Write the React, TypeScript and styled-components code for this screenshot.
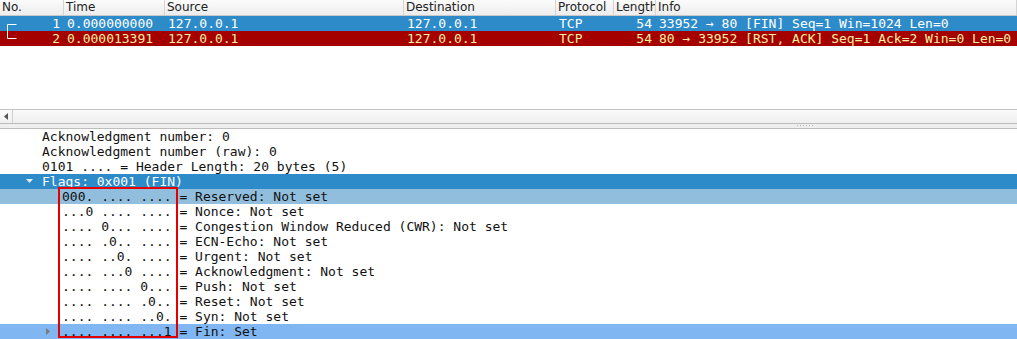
import React from "react";
import styled, { createGlobalStyle, css } from "styled-components";

const GlobalStyle = createGlobalStyle`
  html, body { margin: 0; padding: 0; background: #fff; }
  body { width: 1017px; height: 339px; overflow: hidden; }
`;

const MONO = `"DejaVu Sans Mono", "Liberation Mono", monospace`;
const SANS = `"DejaVu Sans", "Liberation Sans", sans-serif`;

const COLS = "64px 101px 239px 152px 58px 42px 1fr";

const Window = styled.div`
  width: 1017px;
  height: 339px;
  display: flex;
  flex-direction: column;
  overflow: hidden;
`;

const PacketList = styled.div`
  height: 109px;
  background: #fff;
  display: flex;
  flex-direction: column;
`;

const Header = styled.div`
  display: grid;
  grid-template-columns: ${COLS};
  height: 16px;
  background: linear-gradient(#fbfbfb, #ededed);
  border-bottom: 1px solid #c8c8c8;
  box-sizing: border-box;
`;

const HeadCell = styled.div`
  font-family: ${SANS};
  font-size: 12px;
  line-height: 15px;
  color: #222;
  padding-left: 2px;
  border-right: 1px solid #d4d4d4;
  white-space: nowrap;
  overflow: hidden;
`;

const PacketRow = styled.div<{ $bg: string; $fg: string }>`
  display: grid;
  grid-template-columns: ${COLS};
  height: 15px;
  background: ${(p) => p.$bg};
  color: ${(p) => p.$fg};
  font-family: ${MONO};
  font-size: 13px;
  line-height: 15px;
`;

const Cell = styled.div<{ $right?: boolean }>`
  position: relative;
  white-space: nowrap;
  overflow: hidden;
  padding: 0 4px 0 3px;
  ${(p) =>
    p.$right &&
    css`
      text-align: right;
    `}
`;

const Bracket = styled.svg`
  position: absolute;
  left: 6px;
  top: 0;
`;

const HScroll = styled.div`
  height: 15px;
  box-sizing: border-box;
  border-top: 1px solid #c2c2c2;
  border-bottom: 1px solid #bdbdbd;
  background: linear-gradient(#fafafa, #efefef);
  display: flex;
`;

const ScrollBtn = styled.div`
  width: 12px;
  border-right: 1px solid #cfcfcf;
  display: flex;
  align-items: center;
  justify-content: center;
`;

const Splitter = styled.div`
  height: 5px;
  box-sizing: border-box;
  background: #efefef;
  border-bottom: 1px solid #bdbdbd;
  display: flex;
  justify-content: center;
  padding-left: 594px;
  padding-top: 1px;
`;

const Dots = styled.div`
  width: 18px;
  height: 1px;
  background: repeating-linear-gradient(90deg, #b8b8b8 0 1px, transparent 1px 3px);
`;

const Details = styled.div`
  position: relative;
  flex: 1;
  background: #fff;
`;

const TreeRow = styled.div<{ $bg?: string; $fg?: string; $indent: number }>`
  position: relative;
  height: 15px;
  font-family: ${MONO};
  font-size: 13px;
  line-height: 15px;
  white-space: pre;
  padding-left: ${(p) => p.$indent}px;
  background: ${(p) => p.$bg || "transparent"};
  color: ${(p) => p.$fg || "#111"};
`;

const Arrow = styled.svg<{ $left: number }>`
  position: absolute;
  left: ${(p) => p.$left}px;
  top: 4px;
`;

const Highlight = styled.div`
  position: absolute;
  left: 58px;
  top: 58px;
  width: 120px;
  height: 151px;
  box-sizing: border-box;
  border: 2px solid #e40000;
  pointer-events: none;
`;

const headers = ["No.", "Time", "Source", "Destination", "Protocol", "Length", "Info"];

const packets = [
  {
    no: "1",
    time: "0.000000000",
    src: "127.0.0.1",
    dst: "127.0.0.1",
    proto: "TCP",
    len: "54",
    info: "33952 → 80 [FIN] Seq=1 Win=1024 Len=0",
    bg: "#2e8bc9",
    fg: "#ffffff",
    first: true,
  },
  {
    no: "2",
    time: "0.000013391",
    src: "127.0.0.1",
    dst: "127.0.0.1",
    proto: "TCP",
    len: "54",
    info: "80 → 33952 [RST, ACK] Seq=1 Ack=2 Win=0 Len=0",
    bg: "#a40000",
    fg: "#fcef9c",
    first: false,
  },
];

const flagBits = [
  ["000. .... ....", "Reserved: Not set"],
  ["...0 .... ....", "Nonce: Not set"],
  [".... 0... ....", "Congestion Window Reduced (CWR): Not set"],
  [".... .0.. ....", "ECN-Echo: Not set"],
  [".... ..0. ....", "Urgent: Not set"],
  [".... ...0 ....", "Acknowledgment: Not set"],
  [".... .... 0...", "Push: Not set"],
  [".... .... .0..", "Reset: Not set"],
  [".... .... ..0.", "Syn: Not set"],
  [".... .... ...1", "Fin: Set"],
];

export default function App() {
  return (
    <>
      <GlobalStyle />
      <Window>
        <PacketList>
          <Header>
            {headers.map((h) => (
              <HeadCell key={h}>{h}</HeadCell>
            ))}
          </Header>
          {packets.map((p) => (
            <PacketRow key={p.no} $bg={p.bg} $fg={p.fg}>
              <Cell $right>
                <Bracket width="12" height="15">
                  {p.first ? (
                    <path d="M10.5 8.5 H1.5 V15" stroke="#fff" strokeWidth="1" fill="none" />
                  ) : (
                    <path d="M1.5 0 V7.5 H10.5" stroke="#fff" strokeWidth="1" fill="none" />
                  )}
                </Bracket>
                {p.no}
              </Cell>
              <Cell>{p.time}</Cell>
              <Cell>{p.src}</Cell>
              <Cell>{p.dst}</Cell>
              <Cell>{p.proto}</Cell>
              <Cell $right>{p.len}</Cell>
              <Cell>{p.info}</Cell>
            </PacketRow>
          ))}
        </PacketList>
        <HScroll>
          <ScrollBtn>
            <svg width="4" height="7">
              <path d="M4 0 L0 3.5 L4 7 Z" fill="#555" />
            </svg>
          </ScrollBtn>
        </HScroll>
        <Splitter>
          <Dots />
        </Splitter>
        <Details>
          <TreeRow $indent={42}>Acknowledgment number: 0</TreeRow>
          <TreeRow $indent={42}>Acknowledgment number (raw): 0</TreeRow>
          <TreeRow $indent={42}>0101 .... = Header Length: 20 bytes (5)</TreeRow>
          <TreeRow $indent={42} $bg="#2e8bc9" $fg="#ffffff">
            <Arrow $left={26} width="8" height="6">
              <path d="M0 1 L7 1 L3.5 5 Z" fill="#e6eef6" />
            </Arrow>
            Flags: 0x001 (FIN)
          </TreeRow>
          {flagBits.map(([bits, label], i) => (
            <TreeRow
              key={bits}
              $indent={62}
              $bg={i === 0 ? "#90bedc" : i === flagBits.length - 1 ? "#80b6f1" : undefined}
            >
              {i === flagBits.length - 1 && (
                <Arrow $left={46} width="5" height="8">
                  <path d="M0 0 L4 3.5 L0 7 Z" fill="#7a7a7a" />
                </Arrow>
              )}
              {bits} = {label}
            </TreeRow>
          ))}
          <Highlight />
        </Details>
      </Window>
    </>
  );
}
